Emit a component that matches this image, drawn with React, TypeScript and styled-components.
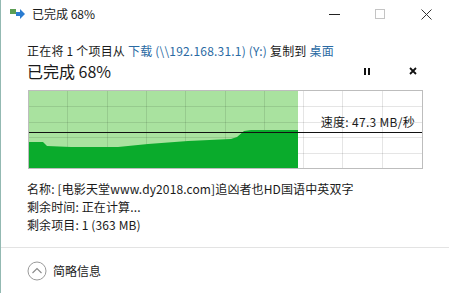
import styled, { createGlobalStyle } from "styled-components"

const GlobalStyle = createGlobalStyle`
	html, body {
		margin: 0;
		padding: 0;
		background: #ffffff;
	}
	body {
		font-family: "Noto Sans CJK SC", "Noto Sans", sans-serif;
		color: #1a1a1a;
	}
`

const Window = styled.div`
	width: 449px;
	height: 293px;
	box-sizing: border-box;
	border-left: 1px solid #93b9b2;
	background: #ffffff;
	display: flex;
	flex-direction: column;
`

const TitleBar = styled.div`
	height: 28px;
	display: flex;
	align-items: center;
	padding-left: 9px;
`

const TitleText = styled.span`
	font-size: 12px;
	line-height: 16px;
	margin-left: 6px;
	flex: 1;
`

const WinButtons = styled.div`
	display: flex;
	align-items: center;
	height: 100%;
`

const WinButton = styled.div<{ $w: number }>`
	width: ${(p) => p.$w}px;
	height: 100%;
	display: flex;
	align-items: center;
	justify-content: center;
`

const Body = styled.div`
	padding-left: 26px;
	padding-right: 26px;
	display: flex;
	flex-direction: column;
`

const FromLine = styled.div`
	margin-top: 15px;
	font-size: 12px;
	line-height: 16px;
	letter-spacing: 0.2px;
	white-space: nowrap;
`

const Link = styled.span`
	color: #2a6aa3;
`

const StatusRow = styled.div`
	margin-top: 1px;
	height: 22px;
	display: flex;
	align-items: center;
`

const BigStatus = styled.div`
	font-size: 16px;
	line-height: 22px;
	flex: 1;
`

const ActionButton = styled.div`
	width: 20px;
	height: 22px;
	display: flex;
	align-items: center;
	justify-content: center;
	margin-left: 26px;
`

const ChartBox = styled.div`
	position: relative;
	margin-top: 8px;
	width: 395px;
	height: 79px;
	box-sizing: border-box;
	border: 1px solid #bdbdbd;
	margin-left: 1px;
`

const SpeedLabel = styled.span`
	position: absolute;
	right: 7px;
	top: 23px;
	font-size: 12px;
	line-height: 16px;
	letter-spacing: 0.3px;
`

const InfoList = styled.div`
	margin-top: 11px;
	display: flex;
	flex-direction: column;
`

const InfoLine = styled.div`
	font-size: 12px;
	line-height: 18px;
	letter-spacing: 0.12px;
	white-space: nowrap;
`

const Separator = styled.div`
	margin-top: 13px;
	height: 1px;
	background: #e3e3e3;
`

const Footer = styled.div`
	flex: 1;
	display: flex;
	align-items: center;
	padding-left: 26px;
	gap: 6px;
	font-size: 12px;
	line-height: 16px;
`

const COLS = 10
const ROWS = 5
const W = 393
const H = 77
const PROGRESS = 269

const darkPath =
	"M0,51 L14,51 L18,55 L42,56 L89,56 L119,53 L159,50 L202,48 L208,46 L215,40 L222,39 L269,39 L269,77 L0,77 Z"

const Chart = () => {
	const vLines = Array.from({ length: COLS - 1 }, (_, i) => Math.round(((i + 1) * W) / COLS) - 0.5)
	const hLines = Array.from({ length: ROWS - 1 }, (_, i) => Math.round(((i + 1) * H) / ROWS) + 0.5)
	return (
		<svg width={W} height={H} style={{ display: "block" }}>
			<rect x={0} y={0} width={PROGRESS} height={H} fill="#a9e29f" />
			{vLines.map((x) => (
				<line key={"v" + x} x1={x} y1={0} x2={x} y2={H} stroke="rgba(0,0,0,0.1)" strokeWidth={1} />
			))}
			{hLines.map((y) => (
				<line key={"h" + y} x1={0} y1={y} x2={W} y2={y} stroke="rgba(0,0,0,0.1)" strokeWidth={1} />
			))}
			<path d={darkPath} fill="#0aab2c" />
			<line x1={0} y1={41.5} x2={W} y2={41.5} stroke="#111" strokeWidth={1.2} />
		</svg>
	)
}

const CopyIcon = () => (
	<svg width="16" height="12" viewBox="0 0 16 12">
		<rect x="0" y="1" width="6" height="5" fill="#5c9e54" />
		<rect x="6" y="4" width="5" height="4" fill="#2a7cd1" />
		<path d="M10,1 L15,6 L10,11 Z" fill="#2a7cd1" />
	</svg>
)

const App = () => {
	return (
		<>
			<GlobalStyle />
			<Window>
				<TitleBar>
					<CopyIcon />
					<TitleText>已完成 68%</TitleText>
					<WinButtons>
						<WinButton $w={46}>
							<svg width="11" height="11" viewBox="0 0 11 11">
								<line x1="0" y1="5.5" x2="11" y2="5.5" stroke="#222" strokeWidth="1" />
							</svg>
						</WinButton>
						<WinButton $w={46}>
							<svg width="10" height="10" viewBox="0 0 10 10">
								<rect x="0.5" y="0.5" width="9" height="9" fill="none" stroke="#c4c4c4" strokeWidth="1" />
							</svg>
						</WinButton>
						<WinButton $w={46}>
							<svg width="11" height="11" viewBox="0 0 11 11">
								<path d="M0.5,0.5 L10.5,10.5 M10.5,0.5 L0.5,10.5" stroke="#333" strokeWidth="1" />
							</svg>
						</WinButton>
					</WinButtons>
				</TitleBar>
				<Body>
					<FromLine>
						正在将 1 个项目从 <Link>下载 (\\192.168.31.1) (Y:)</Link> 复制到 <Link>桌面</Link>
					</FromLine>
					<StatusRow>
						<BigStatus>已完成 68%</BigStatus>
						<ActionButton>
							<svg width="6" height="7" viewBox="0 0 6 7">
								<rect x="0" y="0" width="2" height="7" fill="#111" />
								<rect x="4" y="0" width="2" height="7" fill="#111" />
							</svg>
						</ActionButton>
						<ActionButton>
							<svg width="8" height="8" viewBox="0 0 8 8">
								<path d="M1,1 L7,7 M7,1 L1,7" stroke="#111" strokeWidth="1.8" />
							</svg>
						</ActionButton>
					</StatusRow>
					<ChartBox>
						<Chart />
						<SpeedLabel>速度: 47.3 MB/秒</SpeedLabel>
					</ChartBox>
					<InfoList>
						<InfoLine>名称: [电影天堂www.dy2018.com]追凶者也HD国语中英双字</InfoLine>
						<InfoLine>剩余时间: 正在计算...</InfoLine>
						<InfoLine>剩余项目: 1 (363 MB)</InfoLine>
					</InfoList>
				</Body>
				<Separator />
				<Footer>
					<svg width="20" height="20" viewBox="0 0 20 20">
						<circle cx="10" cy="10" r="9" fill="none" stroke="#9a9a9a" strokeWidth="1" />
						<path d="M5.5,12 L10,7.5 L14.5,12" fill="none" stroke="#8a8a8a" strokeWidth="1.1" />
					</svg>
					<span>简略信息</span>
				</Footer>
			</Window>
		</>
	)
}

export default App
